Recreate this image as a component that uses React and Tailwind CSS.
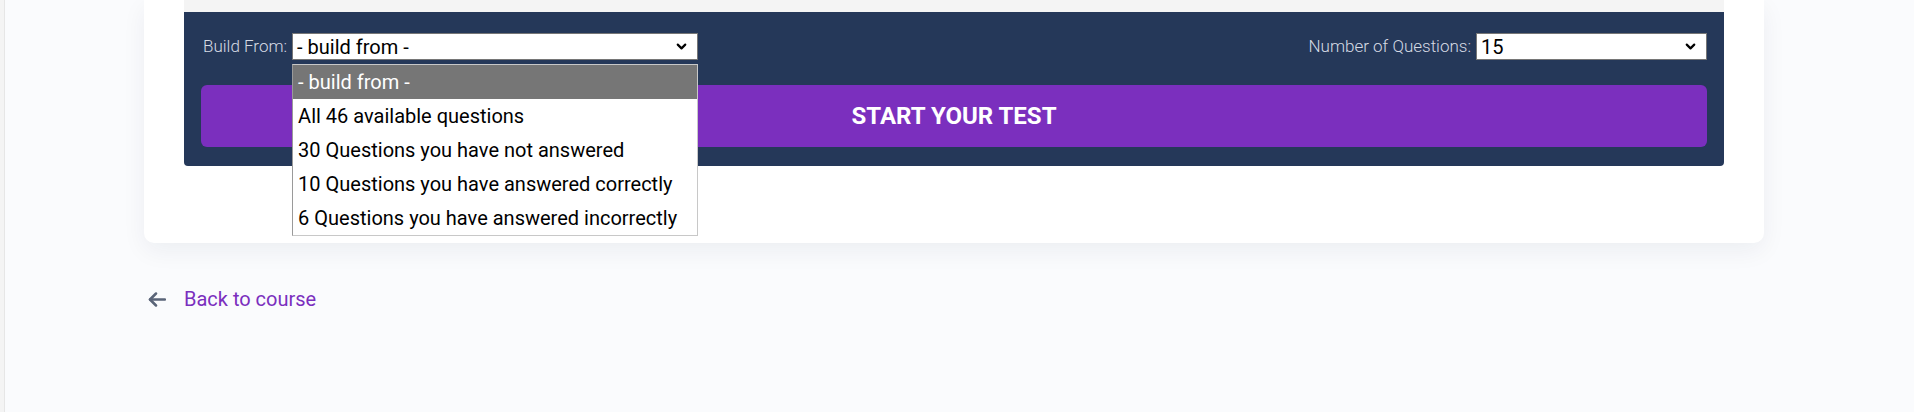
import { ChevronDown } from 'lucide-react';

const options = [
    '- build from -',
    'All 46 available questions',
    '30 Questions you have not answered',
    '10 Questions you have answered correctly',
    '6 Questions you have answered incorrectly',
];

const FakeSelect = ({ value, className }) => (
    <div className={`flex items-center justify-between h-[27px] bg-white border border-[#767676] pl-[4px] pr-[8px] text-[20px] text-black ${className}`}>
        <span className="leading-none">{value}</span>
        <ChevronDown size={15} strokeWidth={3.5} className="text-black" />
    </div>
);

const App = () => {
    return (
        <div className="flex min-h-[412px] bg-[#fafbfd] font-['Roboto',_'Liberation_Sans',_sans-serif]">
            <div className="w-[5px] shrink-0 bg-[#f4f4f4] border-r border-[#e6e6e6]" />
            <div className="pl-[139px]">
                <div className="w-[1620px] bg-white rounded-b-[10px] shadow-[0_8px_24px_rgba(20,30,60,0.06)] px-[40px] pb-[77px]">
                    <div className="h-[12px] bg-[#f4f4f4]" />
                    <div className="bg-[#253859] rounded-b-[4px] px-[17px] pt-[21px] pb-[19px]">
                        <div className="flex items-center justify-between">
                            <div className="flex items-center">
                                <span className="ml-[2px] mr-[5px] text-[17px] font-light text-[#d5dae4]">Build From:</span>
                                <div className="relative">
                                    <FakeSelect value="- build from -" className="w-[406px]" />
                                    <div className="absolute left-0 top-[31px] w-[406px] bg-white border border-[#c8c8c8] border-l-[#9a9a9a] z-10">
                                        {options.map((opt, i) => (
                                            <div
                                                key={opt}
                                                className={`h-[34px] flex items-center pl-[5px] text-[20px] ${i === 0 ? 'bg-[#767676] text-white' : 'text-black'}`}
                                            >
                                                {opt}
                                            </div>
                                        ))}
                                    </div>
                                </div>
                            </div>
                            <div className="flex items-center">
                                <span className="mr-[5px] text-[17px] font-light text-[#d5dae4]">Number of Questions:</span>
                                <FakeSelect value="15" className="w-[231px]" />
                            </div>
                        </div>
                        <button className="mt-[25px] w-full h-[62px] rounded-[6px] bg-[#7b2fbe] text-white text-[24px] font-bold uppercase">
                            Start your test
                        </button>
                    </div>
                </div>
                <a href="#" className="mt-[41px] flex items-center text-[20px] text-[#7b2fbe]">
                    <svg width="18" height="15" viewBox="0 0 18 15" fill="none" stroke="#5a6478" strokeWidth="2.5" strokeLinecap="round" strokeLinejoin="round" className="ml-[4px] mr-[18px]">
                        <path d="M17 7.5H2" />
                        <path d="M8 1.5L2 7.5L8 13.5" />
                    </svg>
                    Back to course
                </a>
            </div>
        </div>
    );
};

export default App;
